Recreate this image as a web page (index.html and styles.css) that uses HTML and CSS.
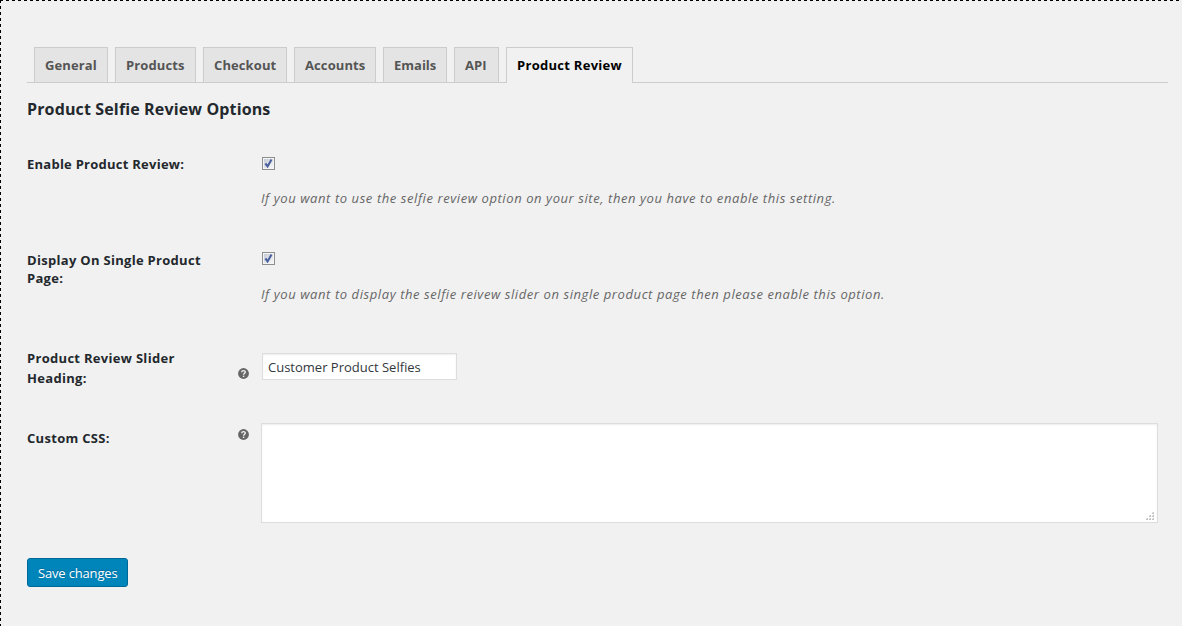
FILE: index.html
```html
<!DOCTYPE html>
<html lang="en">
<head>
<meta charset="utf-8">
<title>Product Review Settings</title>
<link rel="stylesheet" href="styles.css">
</head>
<body>
<main class="page">
  <nav class="tabs">
    <a class="tab t-general">General</a>
    <a class="tab t-products">Products</a>
    <a class="tab t-checkout">Checkout</a>
    <a class="tab t-accounts">Accounts</a>
    <a class="tab t-emails">Emails</a>
    <a class="tab t-api">API</a>
    <a class="tab t-review active">Product Review</a>
  </nav>
  <h2 class="title"><span>Product Selfie Review Options</span></h2>
  <form class="form">
    <div class="row row-enable">
      <div class="label"><span>Enable Product Review:</span></div>
      <div class="help"></div>
      <div class="field">
        <svg class="check" viewBox="0 0 13 13"><use href="#checkbox"/></svg>
        <p class="desc desc-enable"><span>If you want to use the selfie review option on your site, then you have to enable this setting.</span></p>
      </div>
    </div>
    <div class="row row-display">
      <div class="label"><span>Display On Single Product<br>Page:</span></div>
      <div class="help"></div>
      <div class="field">
        <svg class="check" viewBox="0 0 13 13"><use href="#checkbox"/></svg>
        <p class="desc desc-display"><span>If you want to display the selfie reivew slider on single product page then please enable this option.</span></p>
      </div>
    </div>
    <div class="row row-heading">
      <div class="label"><span>Product Review Slider<br>Heading:</span></div>
      <div class="help"><svg class="icon" viewBox="0 0 11 11"><use href="#question"/></svg></div>
      <div class="field"><div class="input"><span>Customer Product Selfies</span></div></div>
    </div>
    <div class="row row-css">
      <div class="label"><span>Custom CSS:</span></div>
      <div class="help"><svg class="icon" viewBox="0 0 11 11"><use href="#question"/></svg></div>
      <div class="field">
        <div class="textarea">
          <svg class="grip" viewBox="0 0 8 8" shape-rendering="crispEdges"><path fill="#c4c4c4" d="M6 0h2v2H6zM3 3h2v2H3zM6 3h2v2H6zM0 6h2v2H0zM3 6h2v2H3zM6 6h2v2H6z"/><path fill="#e6e6e6" d="M6 0h1v1H6zM3 3h1v1H3zM6 3h1v1H6zM0 6h1v1H0zM3 6h1v1H3zM6 6h1v1H6z"/></svg>
        </div>
      </div>
    </div>
    <button class="save" type="button"><span>Save changes</span></button>
  </form>
</main>
<svg class="defs" width="0" height="0">
  <defs>
    <linearGradient id="box" x1="0" y1="0" x2="1" y2="1"><stop offset="0" stop-color="#c5cbd5"/><stop offset="1" stop-color="#f8f8f8"/></linearGradient>
    <symbol id="checkbox" viewBox="0 0 13 13">
      <path fill="#8e8f8f" d="M0 0h13v13H0z"/><path fill="#f4f4f4" d="M1 1h11v11H1z"/><path fill="url(#box)" d="M2 2h9v9H2z"/>
      <path d="M3.4 6.5 5.6 9.4 9.5 2.6" fill="none" stroke="#4a5f9e" stroke-width="2.1"/>
    </symbol>
    <symbol id="question" viewBox="0 0 11 11">
      <circle cx="5.5" cy="5.5" r="5.4" fill="#666"/>
      <path d="M3.7 4.2C3.7 2.1 7.3 2.1 7.3 4.1 7.3 5.3 5.6 5.3 5.6 6.8" fill="none" stroke="#f1f1f1" stroke-width="1.4"/>
      <path fill="#f1f1f1" d="M4.9 7.6h1.4V9H4.9z"/>
    </symbol>
  </defs>
</svg>
</body>
</html>
```
FILE: styles.css
```css
* { box-sizing: border-box; }
body {
  margin: 0;
  background: #f1f1f1;
  color: #23282d;
  font: 13px/18px "Open Sans", "Noto Sans", sans-serif;
}
.page {
  width: 1182px;
  height: 626px;
  overflow: hidden;
  padding: 47px 14px 0 27px;
  background:
    repeating-linear-gradient(90deg, #000 0 3px, #f1f1f1 3px 6px) 0 0 / 100% 1px no-repeat,
    repeating-linear-gradient(180deg, #000 0 3px, #f1f1f1 3px 6px) 0 0 / 1px 100% no-repeat,
    #f1f1f1;
}
.tabs {
  display: flex;
  gap: 7px;
  height: 36px;
  padding-left: 7px;
  border-bottom: 1px solid #ccc;
}
.tab {
  height: 35px;
  padding-left: 10px;
  border: 1px solid #ccc;
  border-bottom: 0;
  background: #e4e4e4;
  color: #555;
  font-weight: 700;
  line-height: 35px;
  letter-spacing: .1px;
  white-space: nowrap;
}
.active { height: 36px; background: #f1f1f1; color: #000; }
.t-general { width: 74px; }
.t-products { width: 81px; }
.t-checkout { width: 84px; }
.t-accounts { width: 82px; }
.t-emails { width: 64px; letter-spacing: 0; }
.t-api { width: 45px; }
.t-review { width: 127px; letter-spacing: .28px; }
.title { margin: 14px 0 0; font-size: 16px; line-height: 24px; height: 24px; font-weight: 700; letter-spacing: .14px; white-space: nowrap; }
.form { display: flex; flex-direction: column; }
.row { display: grid; grid-template-columns: 211px 23px 897px; white-space: nowrap; }
.label { font-weight: 700; letter-spacing: .3px; }
.row-enable { height: 96px; padding-top: 34px; }
.row-enable .label { letter-spacing: .25px; }
.row-display { height: 105px; padding-top: 34px; }
.row-heading { height: 80px; padding-top: 26px; }
.row-heading .label { line-height: 20px; }
.field { display: flex; flex-direction: column; }
.check { width: 13px; height: 13px; margin: 2px 0 0 1px; }
.desc { margin: 19px 0 0; color: #666; font-style: italic; letter-spacing: .58px; font-variant-ligatures: none; }
.row-display .check { margin-top: 1px; }
.row-display .desc { margin-top: 20px; }
.icon { display: block; width: 11px; height: 11px; margin-top: 20px; }
.input { width: 195px; height: 27px; margin: 5px 0 0 1px; padding-left: 5px; border: 1px solid #ddd; background: #fff; color: #32373c; line-height: 27px; box-shadow: inset 0 1px 2px rgba(0,0,0,.07); }
.row-css { height: 135px; padding-top: 21px; margin-top: -21px; }
.row-css .label { padding-top: 27px; }
.row-css .icon { margin-top: 27px; }
.textarea { display: flex; align-items: flex-end; justify-content: flex-end; width: 897px; height: 100px; margin-top: 21px; padding: 2px 3px 2px 2px; border: 1px solid #ddd; background: #fff; box-shadow: inset 0 1px 2px rgba(0,0,0,.07); }
.grip { width: 8px; height: 8px; }
.save { width: 101px; height: 29px; margin-top: 42px; padding: 1px 0 0 10px; border: 1px solid #006799; border-radius: 3px; background: #0085ba; color: #fff; font: 13px/27px "Open Sans", "Noto Sans", sans-serif; letter-spacing: -.17px; text-align: left; white-space: nowrap; text-shadow: 0 -1px 1px #006799; }
.defs { display: block; }
```
